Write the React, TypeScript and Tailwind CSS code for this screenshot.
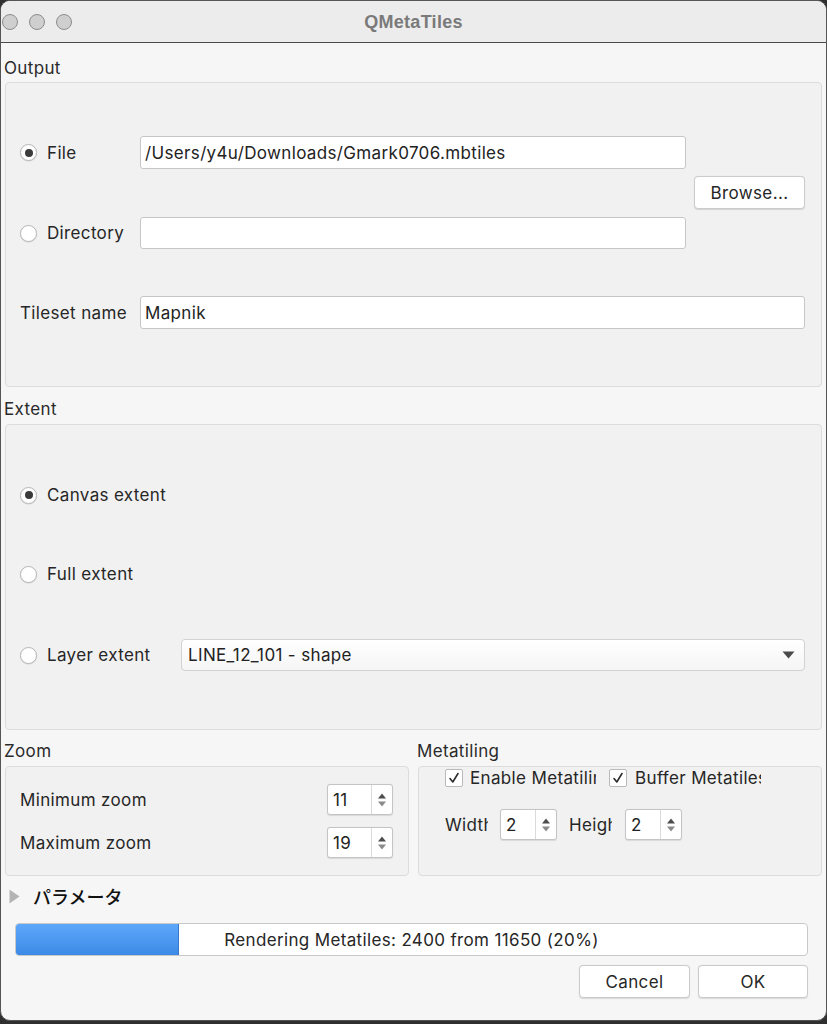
import React from "react";

const Radio = ({ checked }: { checked?: boolean }) => (
  <span className="w-[17px] h-[17px] rounded-full bg-white border border-[#b8b8b8] shadow-[0_0.5px_1px_rgba(0,0,0,0.15)] flex items-center justify-center shrink-0">
    {checked && <span className="w-[8px] h-[8px] rounded-full bg-[#3a3a3a]" />}
  </span>
);

const RadioLabel = ({ checked, label, width }: { checked?: boolean; label: string; width: string }) => (
  <div className={`flex items-center gap-[10px] shrink-0 ${width}`}>
    <Radio checked={checked} />
    <span>{label}</span>
  </div>
);

const TextField = ({ value, className }: { value?: string; className: string }) => (
  <div className={`h-full bg-white border border-[#c6c6c6] rounded-[3px] flex items-center pl-[4px] text-[#222] ${className}`}>
    {value}
  </div>
);

const PushButton = ({ label, width }: { label: string; width: string }) => (
  <div className={`h-[33px] ${width} bg-white border border-[#cbcbcb] rounded-[4px] shadow-[0_0.5px_1px_rgba(0,0,0,0.12)] flex items-center justify-center text-[#262626]`}>
    {label}
  </div>
);

const SpinArrows = () => (
  <svg width="12" height="18" viewBox="0 0 12 18" className="shrink-0">
    <path d="M2 7.5 L6 2.5 L10 7.5 Z" fill="#4d4d4d" />
    <path d="M2 10.5 L6 15.5 L10 10.5 Z" fill="#8a8a8a" />
  </svg>
);

const SpinBox = ({ value, field, width }: { value: string; field: string; width: string }) => (
  <div className={`h-[31px] ${width} bg-white border border-[#c4c4c4] rounded-[3px] flex shadow-[0_0.5px_1px_rgba(0,0,0,0.1)]`}>
    <div className={`${field} h-full flex items-center pl-[5px] text-[#222] border-r border-[#dadada]`}>{value}</div>
    <div className="flex-1 flex items-center justify-center">
      <SpinArrows />
    </div>
  </div>
);

const CheckBox = () => (
  <span className="w-[18px] h-[18px] bg-white border border-[#b9b9b9] rounded-[2px] flex items-center justify-center shrink-0">
    <svg width="12" height="12" viewBox="0 0 12 12">
      <path d="M2 6.5 L4.8 10 L10 1.5" fill="none" stroke="#2b2b2b" strokeWidth="1.6" strokeLinecap="round" strokeLinejoin="round" />
    </svg>
  </span>
);

const GroupTitle = ({ label, className }: { label: string; className: string }) => (
  <div className={`flex items-end -ml-[1px] text-[#2a2a2a] ${className}`}>{label}</div>
);

export default function App() {
  const done = 2400;
  const total = 11650;
  const barWidth = 793;
  const fill = Math.round((done / total) * barWidth);

  return (
    <div className="w-[827px] h-[1024px] bg-[#2f2f2f] font-['Inter','Liberation_Sans',Arial,sans-serif] text-[17px] leading-[20px] tracking-[0.35px] text-[#262626]">
      <div className="h-[1021px] rounded-[10px] overflow-hidden bg-[#f6f6f6] border border-[#555] flex flex-col">
        {/* title bar */}
        <div className="h-[42px] shrink-0 bg-[#ececec] border-b border-[#4a4a4a] grid grid-cols-[1fr_auto_1fr] items-center">
          <div className="flex items-center gap-[11px] pl-[1px]">
            <span className="w-[16px] h-[16px] rounded-full bg-[#cfcfcf] border border-[#8c8c8c]" />
            <span className="w-[16px] h-[16px] rounded-full bg-[#cfcfcf] border border-[#8c8c8c]" />
            <span className="w-[16px] h-[16px] rounded-full bg-[#cfcfcf] border border-[#8c8c8c]" />
          </div>
          <div className="text-[18px] font-bold text-[#7a7a7a] font-['Liberation_Sans',Arial,sans-serif] tracking-[0.3px]">QMetaTiles</div>
          <div />
        </div>

        <div className="flex-1 px-[4px] flex flex-col">
          {/* Output */}
          <GroupTitle label="Output" className="h-[39px] pb-[4px]" />
          <div className="h-[305px] border border-[#dcdcdc] rounded-[4px] bg-[#f1f1f1] pt-[53px] pl-[14px] pr-[16px] flex flex-col">
            <div className="h-[33px] flex items-center">
              <RadioLabel checked label="File" width="w-[120px]" />
              <TextField value="/Users/y4u/Downloads/Gmark0706.mbtiles" className="w-[546px]" />
            </div>
            <div className="mt-[7px] h-[33px] flex justify-end">
              <PushButton label="Browse..." width="w-[111px]" />
            </div>
            <div className="mt-[8px] h-[32px] flex items-center">
              <RadioLabel label="Directory" width="w-[120px]" />
              <TextField className="w-[546px]" />
            </div>
            <div className="mt-[47px] h-[33px] flex items-center">
              <div className="w-[120px] shrink-0">Tileset name</div>
              <TextField value="Mapnik" className="flex-1" />
            </div>
          </div>

          {/* Extent */}
          <GroupTitle label="Extent" className="h-[37px] pb-[5px]" />
          <div className="h-[306px] border border-[#dcdcdc] rounded-[4px] bg-[#f1f1f1] pt-[54px] pl-[14px] pr-[16px] flex flex-col">
            <div className="h-[32px] flex items-center">
              <RadioLabel checked label="Canvas extent" width="w-[161px]" />
            </div>
            <div className="mt-[47px] h-[32px] flex items-center">
              <RadioLabel label="Full extent" width="w-[161px]" />
            </div>
            <div className="mt-[49px] h-[32px] flex items-center">
              <RadioLabel label="Layer extent" width="w-[161px]" />
              <div className="flex-1 h-full bg-gradient-to-b from-white to-[#f5f5f5] border border-[#d2d2d2] rounded-[4px] flex items-center justify-between pl-[6px] pr-[9px] text-[#222]">
                <span>LINE_12_101 - shape</span>
                <svg width="13" height="8" viewBox="0 0 13 8">
                  <path d="M0.5 0.5 H12.5 L6.5 7.5 Z" fill="#4a4a4a" />
                </svg>
              </div>
            </div>
          </div>

          {/* Zoom / Metatiling */}
          <div className="grid grid-cols-[404px_404px] gap-x-[9px] pr-[1px]">
            <GroupTitle label="Zoom" className="h-[36px] pb-[5px]" />
            <GroupTitle label="Metatiling" className="h-[36px] pb-[5px]" />

            <div className="h-[110px] border border-[#dcdcdc] rounded-[4px] bg-[#f1f1f1] pt-[17px] pl-[14px] pr-[15px] flex flex-col">
              <div className="h-[31px] flex items-center justify-between">
                <span>Minimum zoom</span>
                <SpinBox value="11" field="w-[44px]" width="w-[66px]" />
              </div>
              <div className="mt-[12px] h-[31px] flex items-center justify-between">
                <span>Maximum zoom</span>
                <SpinBox value="19" field="w-[44px]" width="w-[66px]" />
              </div>
            </div>

            <div className="h-[110px] border border-[#dcdcdc] rounded-[4px] bg-[#f1f1f1] pt-[1px] pl-[26px] flex flex-col">
              <div className="h-[20px] flex items-center">
                <CheckBox />
                <span className="ml-[7px] w-[126px] overflow-hidden whitespace-nowrap">Enable Metatiling</span>
                <span className="ml-[13px]"><CheckBox /></span>
                <span className="ml-[8px] w-[126px] overflow-hidden whitespace-nowrap">Buffer Metatiles</span>
              </div>
              <div className="mt-[21px] h-[31px] flex items-center">
                <span className="w-[43px] overflow-hidden whitespace-nowrap">Width</span>
                <span className="ml-[12px]"><SpinBox value="2" field="w-[35px]" width="w-[57px]" /></span>
                <span className="ml-[12px] w-[43px] overflow-hidden whitespace-nowrap">Height</span>
                <span className="ml-[13px]"><SpinBox value="2" field="w-[35px]" width="w-[57px]" /></span>
              </div>
            </div>
          </div>

          {/* Parameters */}
          <div className="h-[40px] flex items-center pl-[4px]">
            <svg width="11" height="15" viewBox="0 0 11 15">
              <path d="M0.5 0.5 L10.5 7.5 L0.5 14.5 Z" fill="#b4b4b4" />
            </svg>
            <span className="ml-[13px] text-[18px] font-medium text-[#111] tracking-normal font-['Noto_Sans_CJK_JP',sans-serif]">パラメータ</span>
          </div>

          {/* Progress */}
          <div className="mt-[7px] ml-[10px] w-[793px] h-[33px] relative bg-white border border-[#c9c9c9] rounded-[4px] overflow-hidden">
            <div
              className="h-full bg-gradient-to-b from-[#5ea8fb] to-[#3c8ae6] border-r border-[#3a78c9]"
              style={{ width: `${fill}px` }}
            />
            <div className="absolute inset-0 flex items-center justify-center text-[#262626]">
              Rendering Metatiles: {done} from {total} (20%)
            </div>
          </div>

          {/* Buttons */}
          <div className="mt-[9px] mr-[14px] flex justify-end gap-[8px]">
            <PushButton label="Cancel" width="w-[111px]" />
            <PushButton label="OK" width="w-[110px]" />
          </div>
        </div>
      </div>
    </div>
  );
}
